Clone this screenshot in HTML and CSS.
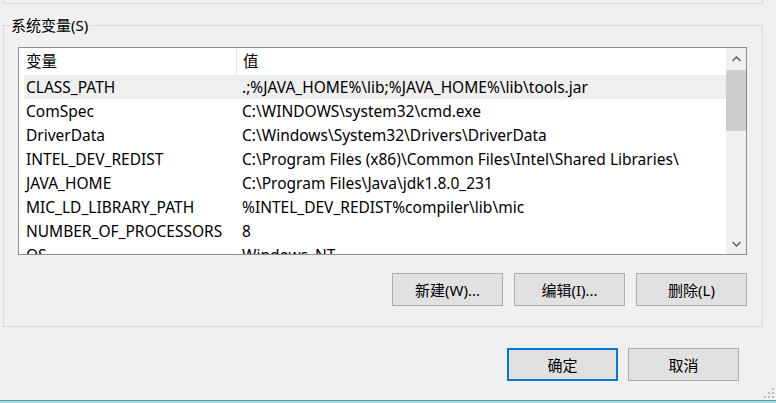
FILE: index.html
```html
<!DOCTYPE html>
<html lang="zh-CN">
<head>
    <meta charset="UTF-8">
    <title>环境变量</title>
    <link rel="stylesheet" href="styles.css">
</head>
<body>

<div class="prev-group"></div>

<fieldset class="group">
    <legend>系统变量(S)</legend>

    <div class="list-view">
        <div class="list-body">
            <div class="list-header">
                <div class="col col-name">变量</div>
                <div class="col col-value">值</div>
            </div>
            <div class="row selected">
                <div class="col col-name">CLASS_PATH</div>
                <div class="col col-value">.;%JAVA_HOME%\lib;%JAVA_HOME%\lib\tools.jar</div>
            </div>
            <div class="row">
                <div class="col col-name">ComSpec</div>
                <div class="col col-value">C:\WINDOWS\system32\cmd.exe</div>
            </div>
            <div class="row">
                <div class="col col-name">DriverData</div>
                <div class="col col-value">C:\Windows\System32\Drivers\DriverData</div>
            </div>
            <div class="row">
                <div class="col col-name">INTEL_DEV_REDIST</div>
                <div class="col col-value">C:\Program Files (x86)\Common Files\Intel\Shared Libraries\</div>
            </div>
            <div class="row">
                <div class="col col-name">JAVA_HOME</div>
                <div class="col col-value">C:\Program Files\Java\jdk1.8.0_231</div>
            </div>
            <div class="row">
                <div class="col col-name">MIC_LD_LIBRARY_PATH</div>
                <div class="col col-value">%INTEL_DEV_REDIST%compiler\lib\mic</div>
            </div>
            <div class="row">
                <div class="col col-name">NUMBER_OF_PROCESSORS</div>
                <div class="col col-value">8</div>
            </div>
            <div class="row">
                <div class="col col-name">OS</div>
                <div class="col col-value">Windows_NT</div>
            </div>
        </div>

        <div class="scrollbar">
            <div class="scroll-btn">
                <svg width="9" height="6" viewBox="0 0 9 6"><path d="M0.5 5 L4.5 1 L8.5 5" fill="none" stroke="#606060" stroke-width="1.5"/></svg>
            </div>
            <div class="scroll-track">
                <div class="scroll-thumb"></div>
            </div>
            <div class="scroll-btn">
                <svg width="9" height="6" viewBox="0 0 9 6"><path d="M0.5 1 L4.5 5 L8.5 1" fill="none" stroke="#606060" stroke-width="1.5"/></svg>
            </div>
        </div>
    </div>

    <div class="button-row">
        <button class="btn">新建(W)...</button>
        <button class="btn">编辑(I)...</button>
        <button class="btn">删除(L)</button>
    </div>
</fieldset>

<div class="dialog-buttons">
    <button class="btn default">确定</button>
    <button class="btn">取消</button>
</div>

<div class="window-edge"></div>

<svg class="grip" width="12" height="12" viewBox="0 0 12 12">
    <rect x="9" y="1" width="2" height="2" fill="#bdbdbd"/>
    <rect x="5" y="5" width="2" height="2" fill="#bdbdbd"/>
    <rect x="9" y="5" width="2" height="2" fill="#bdbdbd"/>
    <rect x="1" y="9" width="2" height="2" fill="#bdbdbd"/>
    <rect x="5" y="9" width="2" height="2" fill="#bdbdbd"/>
    <rect x="9" y="9" width="2" height="2" fill="#bdbdbd"/>
</svg>

</body>
</html>
```

FILE: styles.css
```css
html, body {
    margin: 0;
    padding: 0;
}

body {
    position: relative;
    width: 776px;
    height: 403px;
    overflow: hidden;
    display: flex;
    flex-direction: column;
    background-color: #f0f0f0;
    color: #000;
    font-family: "Noto Sans", "Noto Sans CJK SC", sans-serif;
    font-size: 15px;
}

.prev-group {
    margin-left: 3px;
    width: 758px;
    height: 3px;
    border: 1px solid #dcdcdc;
    border-top: none;
}

.group {
    margin: 11px 0 0 3px;
    width: 729px;
    padding: 0 15px 20px 14px;
    border: 1px solid #dcdcdc;
    min-width: 0;
}

.group legend {
    margin-left: -8px;
    padding: 0 2px 0 1px;
    font-size: 15px;
    line-height: 20px;
}

.list-view {
    margin-top: 12px;
    display: flex;
    height: 206px;
    border: 1px solid #8f8f8f;
    background-color: #fff;
    font-size: 15.5px;
}

.list-body {
    flex: 1;
    overflow: hidden;
    padding-left: 5px;
}

.list-header {
    display: flex;
    height: 27px;
    line-height: 27px;
    margin-left: -5px;
    padding-left: 5px;
}

.list-header .col-name {
    border-right: 1px solid #e5e5e5;
}

.row {
    display: flex;
    height: 24px;
    line-height: 24px;
    white-space: nowrap;
}

.row.selected {
    background-color: #efefef;
}

.col {
    padding-left: 2px;
    white-space: nowrap;
}

.col-name {
    width: 210px;
    flex-shrink: 0;
}

.col-value {
    padding-left: 6px;
}

.scrollbar {
    width: 20px;
    display: flex;
    flex-direction: column;
    background-color: #f0f0f0;
}

.scroll-btn {
    height: 21px;
    display: flex;
    align-items: center;
    justify-content: center;
}

.scroll-track {
    flex: 1;
}

.scroll-thumb {
    margin-top: 1px;
    height: 61px;
    background-color: #cdcdcd;
}

.button-row {
    margin-top: 18px;
    display: flex;
    justify-content: flex-end;
    gap: 11px;
}

.btn {
    width: 111px;
    height: 33px;
    margin: 0;
    padding: 0;
    border: 1px solid #adadad;
    background-color: #e1e1e1;
    color: #000;
    font-family: inherit;
    font-size: 15px;
}

.dialog-buttons {
    margin-top: 21px;
    padding-right: 37px;
    display: flex;
    justify-content: flex-end;
    gap: 10px;
}

.btn.default {
    border: 2px solid #0078d7;
}

.window-edge {
    margin-top: auto;
    height: 2px;
    border-top: 1px solid #4fa6b4;
    background-color: #acd8de;
}

.grip {
    position: absolute;
    right: 1px;
    bottom: 4px;
}
```
